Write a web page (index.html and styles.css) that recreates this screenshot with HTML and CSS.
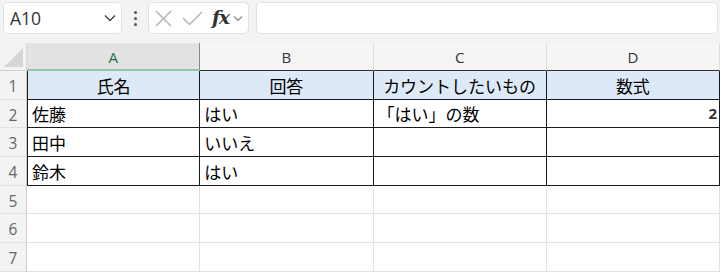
FILE: index.html
```html
<!DOCTYPE html>
<html lang="ja">
<head>
<meta charset="utf-8">
<link rel="stylesheet" href="styles.css">
</head>
<body>
<div class="toolbar">
  <div class="namebox">
    <span class="ref">A10</span>
    <svg class="chev" width="12" height="8" viewBox="0 0 12 8"><polyline points="1,1.5 6,6.5 11,1.5" fill="none" stroke="#444" stroke-width="1.4"/></svg>
  </div>
  <div class="dots"><i></i><i></i><i></i></div>
  <div class="fxbox">
    <svg class="ic-x" width="17" height="17" viewBox="0 0 17 17"><path d="M1 1 L16 16 M16 1 L1 16" stroke="#b4b4b4" stroke-width="1.5" fill="none"/></svg>
    <svg class="ic-ok" width="21" height="16" viewBox="0 0 21 16"><polyline points="1,8 7.5,14.5 20,2" stroke="#b4b4b4" stroke-width="1.5" fill="none"/></svg>
    <span class="fx">fx</span>
    <svg class="ic-dd" width="10" height="7" viewBox="0 0 10 7"><polyline points="1,1.5 5,5.5 9,1.5" fill="none" stroke="#888" stroke-width="1.2"/></svg>
  </div>
  <div class="formula"></div>
</div>
<div class="sheet">
  <div class="corner"><span class="tri"></span></div>
  <div class="colh sel">A</div>
  <div class="colh">B</div>
  <div class="colh">C</div>
  <div class="colh">D</div>

  <div class="rowh">1</div>
  <div class="c t hd first">氏名</div>
  <div class="c t hd">回答</div>
  <div class="c t hd">カウントしたいもの</div>
  <div class="c t hd">数式</div>

  <div class="rowh">2</div>
  <div class="c t first">佐藤</div>
  <div class="c t">はい</div>
  <div class="c t">「はい」の数</div>
  <div class="c t num">2</div>

  <div class="rowh">3</div>
  <div class="c t first">田中</div>
  <div class="c t">いいえ</div>
  <div class="c t"></div>
  <div class="c t"></div>

  <div class="rowh">4</div>
  <div class="c t first">鈴木</div>
  <div class="c t">はい</div>
  <div class="c t"></div>
  <div class="c t"></div>

  <div class="rowh">5</div>
  <div class="c"></div><div class="c"></div><div class="c"></div><div class="c"></div>
  <div class="rowh">6</div>
  <div class="c"></div><div class="c"></div><div class="c"></div><div class="c"></div>
  <div class="rowh">7</div>
  <div class="c"></div><div class="c"></div><div class="c"></div><div class="c"></div>
</div>
</body>
</html>
```

FILE: styles.css
```css
* { box-sizing: border-box; }
html, body { margin: 0; padding: 0; }
body {
  width: 720px;
  height: 273px;
  overflow: hidden;
  background: #ffffff;
  font-family: "Noto Sans CJK JP", "Noto Sans", sans-serif;
  color: #000;
}
.toolbar {
  display: flex;
  align-items: center;
  height: 43px;
  padding: 2px 2px 9px 3px;
  background: #f3f3f3;
}
.namebox {
  width: 119px;
  height: 32px;
  background: #fff;
  border: 1px solid #e2e2e2;
  border-radius: 5px;
  display: flex;
  align-items: center;
  justify-content: space-between;
  padding: 0 5px 0 6px;
}
.ref {
  font-family: "Open Sans", "Noto Sans", sans-serif;
  font-size: 17.5px;
  color: #333;
}
.dots {
  width: 26px;
  display: flex;
  flex-direction: column;
  align-items: center;
  gap: 3px;
}
.dots i {
  display: block;
  width: 3px;
  height: 3px;
  border-radius: 50%;
  background: #555;
}
.fxbox {
  width: 101px;
  height: 32px;
  background: #fff;
  border: 1px solid #e2e2e2;
  border-radius: 5px;
  display: flex;
  align-items: center;
  padding: 0 0 0 6px;
}
.ic-ok { margin-left: 10px; }
.fx {
  font-family: "DejaVu Serif", "Liberation Serif", serif;
  font-style: italic;
  font-weight: bold;
  font-size: 19px;
  color: #333;
  letter-spacing: -1.5px;
  margin-left: 9px;
  line-height: 1;
  padding-bottom: 2px;
}
.ic-dd { margin-left: 4px; }
.formula {
  flex: 1;
  height: 32px;
  margin-left: 7px;
  background: #fff;
  border: 1px solid #e2e2e2;
  border-radius: 5px;
}
.sheet {
  display: grid;
  grid-template-columns: 27px repeat(4, 1fr);
  grid-template-rows: 28px repeat(7, 28.7px);
}
.corner {
  background: #f3f3f3;
  border-right: 1px solid #d8d8d8;
  border-bottom: 1px solid #d0d0d0;
  position: relative;
}
.tri {
  position: absolute;
  right: 3px;
  bottom: 3px;
  width: 0;
  height: 0;
  border-left: 19px solid transparent;
  border-bottom: 19px solid #d6d6d6;
}
.colh {
  background: #f5f5f5;
  border-right: 1px solid #dcdcdc;
  border-bottom: 1px solid #303030;
  display: flex;
  align-items: center;
  justify-content: center;
  font-family: "Open Sans", "Noto Sans", sans-serif;
  font-size: 15px;
  color: #333;
  padding-top: 1px;
}
.colh.sel {
  background: #e2e2e2;
  color: #1e7145;
  border-right: 1px solid #8a8a8a;
  border-bottom: 2px solid #8fc8a6;
}
.rowh {
  background: #f3f3f3;
  border-right: 1px solid #d0d0d0;
  border-bottom: 1px solid #e0e0e0;
  display: flex;
  align-items: center;
  justify-content: center;
  font-family: "Open Sans", "Noto Sans", sans-serif;
  font-size: 15.5px;
  color: #666;
  padding-top: 2px;
}
.c {
  border-right: 1px solid #e1e1e1;
  border-bottom: 1px solid #e1e1e1;
  display: flex;
  align-items: flex-end;
  padding: 0 3px 1px 4px;
  font-size: 17px;
  line-height: 25px;
  white-space: nowrap;
  overflow: visible;
}
.c.t {
  border-right: 1px solid #1a1a1a;
  border-bottom: 1px solid #1a1a1a;
}
.c.first { border-left: 1px solid #1a1a1a; }
.c.hd {
  background: #dde9f6;
  justify-content: center;
  padding-left: 0;
  padding-right: 0;
}
.c.num {
  justify-content: flex-end;
  font-family: "Open Sans", "Noto Sans", sans-serif;
  font-weight: bold;
  font-size: 15px;
  color: #333;
  padding-right: 2px;
}
```
